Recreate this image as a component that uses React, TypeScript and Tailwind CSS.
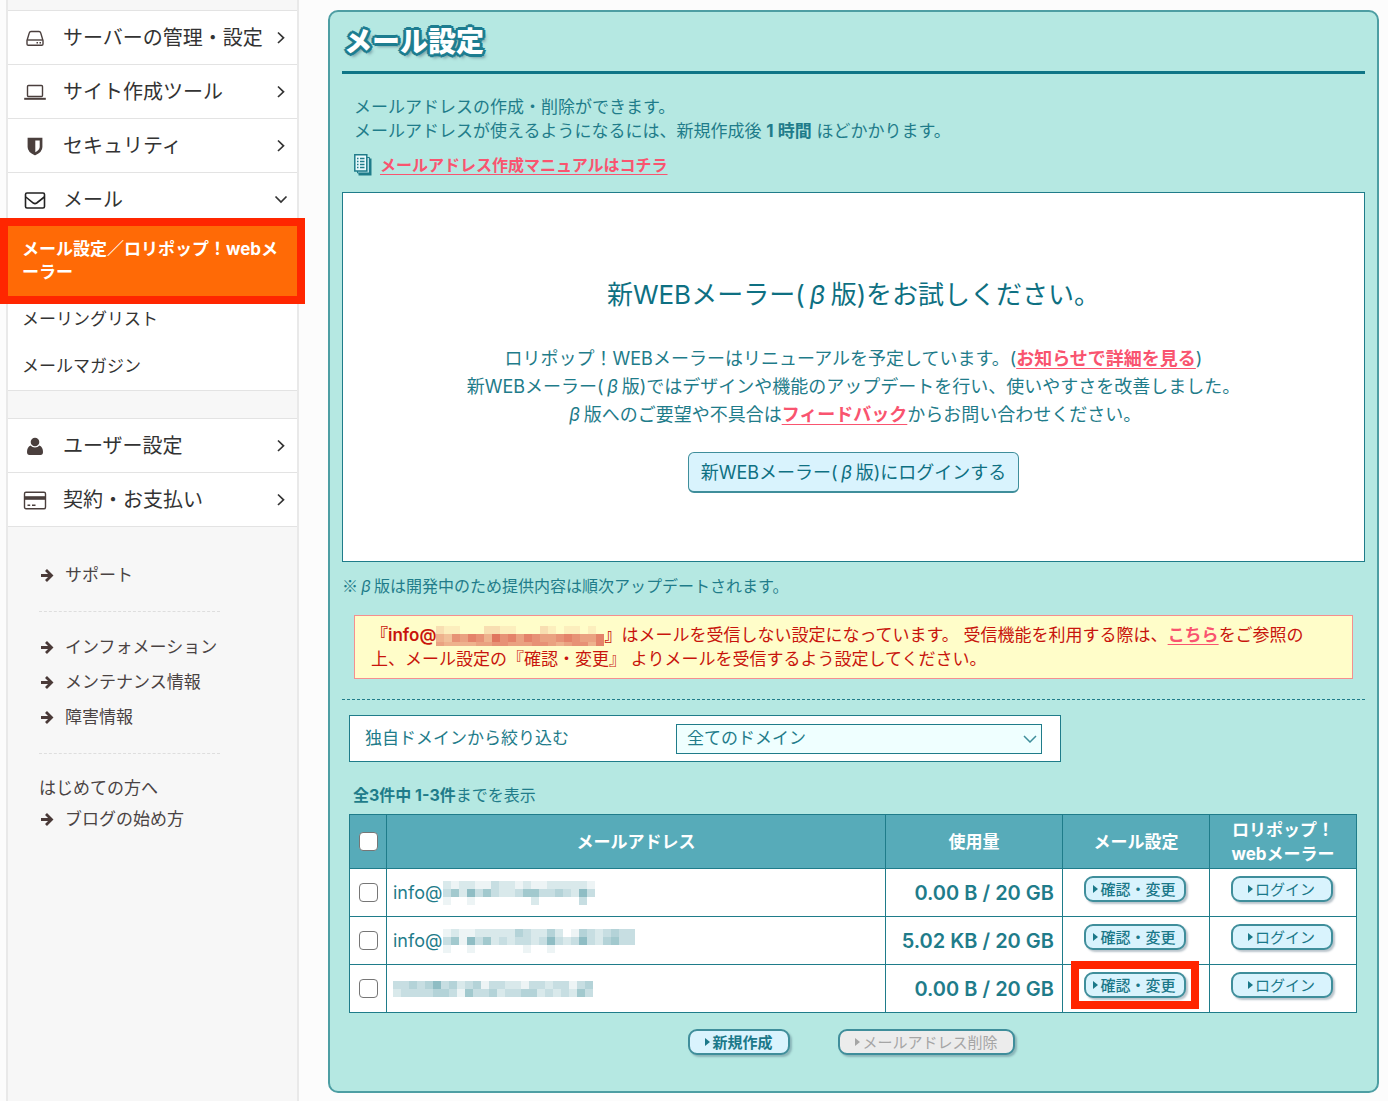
import React from 'react';

type IconName = 'server' | 'laptop' | 'shield' | 'mail' | 'user' | 'card';

const SERVER_MENU: { icon: IconName; label: string }[] = [
  { icon: 'server', label: 'サーバーの管理・設定' },
  { icon: 'laptop', label: 'サイト作成ツール' },
  { icon: 'shield', label: 'セキュリティ' },
];

const ACCOUNT_MENU: { icon: IconName; label: string }[] = [
  { icon: 'user', label: 'ユーザー設定' },
  { icon: 'card', label: '契約・お支払い' },
];

// Each digit is the strength of one 8px block, 0 = empty
const MASK_A = [
  '2122113221211222221',
  '3526353223553343263',
  '1001000000020000030',
];
const MASK_B = [
  '121122222432242014323433',
  '351635232332363236324533',
  '100100000010010000000000',
];
const MASK_C = [
  '3343463423413322133233134',
  '2333344315334233442323253',
];
const MASK_WARN = [
  '211000221100021011010',
  '547687597868766787668',
  '655556677666776567758',
];

const MAIL_ROWS = [
  { name: 'info@', mask: MASK_A, usage: '0.00 B / 20 GB', marked: false },
  { name: 'info@', mask: MASK_B, usage: '5.02 KB / 20 GB', marked: false },
  { name: '', mask: MASK_C, usage: '0.00 B / 20 GB', marked: true },
];

const Mosaic: React.FC<{ rows: string[]; color: string; className?: string }> = ({ rows, color, className }) => (
  <svg
    width={rows[0].length * 8}
    height={rows.length * 8}
    className={className}
    shapeRendering="crispEdges"
    aria-hidden="true"
  >
    {rows.map((row, y) =>
      row.split('').map((v, x) => (
        <rect key={`${x}-${y}`} x={x * 8} y={y * 8} width="8" height="8" fill={color} opacity={Number(v) / 12} />
      ))
    )}
  </svg>
);

const MenuIcon: React.FC<{ name: IconName }> = ({ name }) => (
  <svg width="24" height="24" viewBox="0 0 24 24" fill="none" stroke="#4a3f3d" strokeWidth="1.4" aria-hidden="true">
    {name === 'server' && (
      <>
        <path d="M4 14.5L6.3 6.9Q6.700 5.500 8 5.500H16Q17.300 5.500 17.700 6.900L20 14.500V18Q20 19.300 18.700 19.300H5.300Q4 19.300 4 18Z" />
        <path d="M4.300 14H19.700" />
        <path d="M13.500 16.700H15M16.500 16.700H18" strokeWidth="1.600" />
      </>
    )}
    {name === 'laptop' && (
      <>
        <rect x="4.500" y="5.500" width="15" height="11" rx="1" />
        <path d="M1.200 18.800h21.600" strokeWidth="2" />
      </>
    )}
    {name === 'shield' && (
      <>
        <path d="M5.300 4.500h13.400v8.500q0 4.700-6.700 7.600-6.700-2.900-6.700-7.600Z" fill="#4a3f3d" />
        <path d="M12.300 6.500h4.400v6.500q0 2.800-4.400 5.200Z" fill="#fff" stroke="none" />
      </>
    )}
    {name === 'mail' && (
      <>
        <rect x="2.500" y="5" width="19" height="15" rx="1.500" stroke="#222" strokeWidth="1.600" />
        <path d="m2.800 9 7.500 6q1.700 1.200 3.400 0L21.300 9" stroke="#222" strokeWidth="1.600" />
      </>
    )}
    {name === 'user' && (
      <g fill="#4a3f3d" stroke="none">
        <circle cx="12" cy="8" r="4.300" />
        <path d="M7.500 11.500Q4 13 4 18q0 3 2.500 3h11q2.500 0 2.500-3 0-5-3.500-6.500-1.700 2-4.500 2t-4.500-2Z" />
      </g>
    )}
    {name === 'card' && (
      <>
        <rect x="1.500" y="4.200" width="21" height="16.600" rx="1.500" />
        <path d="M1.500 10h21" strokeWidth="3.600" />
        <path d="M4.500 17.200h2.700M9 17.200h3.500" strokeWidth="1.500" />
      </>
    )}
  </svg>
);

const Chevron: React.FC<{ down?: boolean }> = ({ down }) => (
  <svg width="14" height="14" viewBox="0 0 14 14" fill="none" stroke="#333" strokeWidth="1.700" aria-hidden="true">
    <path d={down ? 'M1.500 3.500 7 9l5.500-5.500' : 'M4 1.500 9.500 6.800 4 12'} />
  </svg>
);

const MenuRow: React.FC<{ icon: IconName; label: string; open?: boolean }> = ({ icon, label, open }) => (
  <a href="#" className={`flex items-center bg-white pr-[9px] pl-[15px] ${open ? 'h-[53px]' : 'h-[54px] border-b border-[#e3e3e3]'}`}>
    <MenuIcon name={icon} />
    <span className="ml-4 flex-1 text-[20px] whitespace-nowrap text-[#333]">{label}</span>
    <Chevron down={open} />
  </a>
);

const ArrowLink: React.FC<{ label: string }> = ({ label }) => (
  <a href="#" className="flex h-[35px] items-center gap-2.5 text-[17px] text-[#4a4343]">
    <svg width="16" height="16" viewBox="0 0 16 16" fill="none" stroke="#4a3a38" strokeWidth="2.800" aria-hidden="true">
      <path d="M2 7.500H12.500M7 2 12.500 7.500 7 13" />
    </svg>
    {label}
  </a>
);

const PillButton: React.FC<{ label: string; className?: string; disabled?: boolean }> = ({ label, className = '', disabled }) => (
  <button
    type="button"
    disabled={disabled}
    className={`inline-flex h-[26px] items-center justify-center gap-0.5 rounded-[9px] border-2 border-[#3f8e9b] text-[15px] leading-none whitespace-nowrap shadow-[2px_2px_2px_rgba(60,90,110,0.35)] ${
      disabled ? 'bg-[#ececec] text-[#a5a5a5]' : 'bg-[#d9f3fd] text-[#1b7889]'
    } ${className}`}
  >
    <svg width="5" height="8" viewBox="0 0 5 8" fill="currentColor" aria-hidden="true">
      <path d="M0 0 5 4 0 8Z" />
    </svg>
    {label}
  </button>
);

const PinkLink: React.FC<{ children: React.ReactNode }> = ({ children }) => (
  <a href="#" className="font-bold text-[#f9546f] underline underline-offset-3">
    {children}
  </a>
);

const Beta = () => <span className="inline-block w-[1em] text-center italic">β</span>;

const Check: React.FC<{ label: string }> = ({ label }) => (
  <input
    type="checkbox"
    aria-label={label}
    className="mx-auto block size-[19px] appearance-none rounded-[4px] border border-[#767676] bg-white"
  />
);

const Sidebar = () => (
  <aside className="w-[293px] shrink-0 border-x-2 border-[#e9e9e9] bg-[#f7f7f7] pt-[10px]">
    <nav className="border-t border-[#e3e3e3]">
      {SERVER_MENU.map((m) => (
        <MenuRow key={m.label} {...m} />
      ))}
      <MenuRow icon="mail" label="メール" open />
      <div className="relative bg-[#ff6a06]">
        <a href="#" className="block px-3.5 py-3 text-[17px] leading-[23px] font-bold break-all text-white">
          メール設定／ロリポップ！webメーラー
        </a>
        <span className="pointer-events-none absolute -inset-2 border-8 border-[#ff2600]" />
      </div>
      <a href="#" className="block bg-white px-3.5 py-3 text-[17px] leading-[23px] text-[#333]">メーリングリスト</a>
      <a href="#" className="block border-b border-[#e3e3e3] bg-white px-3.5 py-3 text-[17px] leading-[23px] text-[#333]">
        メールマガジン
      </a>
    </nav>
    <nav className="mt-[27px] border-t border-[#e3e3e3]">
      {ACCOUNT_MENU.map((m) => (
        <MenuRow key={m.label} {...m} />
      ))}
    </nav>
    <div className="w-[212px] pt-[31px] pl-[31px]">
      <ArrowLink label="サポート" />
      <hr className="my-[18px] border-t border-dashed border-[#dedede]" />
      <ArrowLink label="インフォメーション" />
      <ArrowLink label="メンテナンス情報" />
      <ArrowLink label="障害情報" />
      <hr className="my-[18px] border-t border-dashed border-[#dedede]" />
      <p className="pt-0.5 text-[17px] leading-7 text-[#4a4343]">はじめての方へ</p>
      <ArrowLink label="ブログの始め方" />
    </div>
  </aside>
);

const MailTable = () => (
  <table className="w-full table-fixed border-collapse border border-[#1f7c8a] bg-white text-[17px] [&_td]:border [&_td]:border-[#1f7c8a] [&_th]:border [&_th]:border-[#1f7c8a]">
    <colgroup>
      <col className="w-[37px]" />
      <col />
      <col className="w-[177px]" />
      <col className="w-[147px]" />
      <col className="w-[147px]" />
    </colgroup>
    <thead>
      <tr className="h-[54px] bg-[#57abb9] leading-6 text-white">
        <th className="p-0">
          <Check label="すべて選択" />
        </th>
        <th className="p-0">メールアドレス</th>
        <th className="p-0">使用量</th>
        <th className="p-0">メール設定</th>
        <th className="p-0">
          ロリポップ！
          <br />
          webメーラー
        </th>
      </tr>
    </thead>
    <tbody>
      {MAIL_ROWS.map((row, i) => (
        <tr key={i} className="h-12">
          <td className="p-0 text-center">
            <Check label={`${i + 1}件目を選択`} />
          </td>
          <td className="p-0">
            <div className="flex h-6 items-center pl-1.5">
              {row.name && <span className="w-[50px] text-[18px]">{row.name}</span>}
              <Mosaic rows={row.mask} color="#1f7c8a" />
            </div>
          </td>
          <td className="p-0 pr-2 text-right text-[20px] font-semibold whitespace-nowrap">{row.usage}</td>
          <td className="pt-1.5 pr-[3px] pb-0 pl-0 text-center align-top">
            <span className="relative inline-flex">
              <PillButton label="確認・変更" className="w-[102px] font-medium" />
              {row.marked && (
                <span className="pointer-events-none absolute -inset-x-[13px] -inset-y-[11px] border-8 border-[#ff2600]" />
              )}
            </span>
          </td>
          <td className="pt-1.5 pr-[3px] pb-0 pl-0 text-center align-top">
            <PillButton label="ログイン" className="w-[102px]" />
          </td>
        </tr>
      ))}
    </tbody>
  </table>
);

const App: React.FC = () => {
  return (
    <div className="flex min-h-screen bg-[#fcfcfc] pl-1.5 font-['Inter','Noto_Sans_CJK_JP',sans-serif]">
      <Sidebar />
      <main className="min-w-0 flex-1 pt-[10px] pr-[9px] pb-2 pl-[29px] text-[#1f7c8a]">
        <div className="rounded-[10px] border-2 border-[#4d9ea3] bg-[#b5e8e2] px-3 pt-3 pb-9">
          <h1 className="border-b-3 border-[#0e7586] pb-2.5 pl-0.5 text-[28px] leading-[37px] font-black text-white">
            <span className="[text-shadow:2px_2px_0_#1d7d90,-2px_2px_0_#1d7d90,2px_-2px_0_#1d7d90,-2px_-2px_0_#1d7d90,3px_0_0_#1d7d90,-3px_0_0_#1d7d90,0_3px_0_#1d7d90,0_-3px_0_#1d7d90,3px_4px_3px_rgba(60,90,110,0.5)]">
              メール設定
            </span>
          </h1>

          <div className="px-3 pt-[21px] text-[17px] leading-6">
            <p>メールアドレスの作成・削除ができます。</p>
            <p>
              メールアドレスが使えるようになるには、新規作成後 <b>1 時間</b> ほどかかります。
            </p>
            <p className="mt-2.5 flex items-center gap-2 text-[16px]">
              <svg width="18" height="22" viewBox="0 0 18 22" aria-hidden="true">
                <path d="M4.500 4.500H17.500V21.500H4.500Z" fill="#1f7c8a" />
                <path d="M3.500 3.500H15.500V19H3.500Z" fill="#b5dfe6" stroke="#1f7c8a" />
                <path d="M.800.800H12.800V17H.800Z" fill="#e8fafc" stroke="#1f7c8a" strokeWidth="1.500" />
                <path d="M3 4.500h1.500M6 4.500h4.500M3 7.500h1.500M6 7.500h4.500M3 10.500h1.500M6 10.500h4.500M3 13.500h1.500M6 13.500h4.500" stroke="#1f7c8a" strokeWidth="1.300" />
              </svg>
              <PinkLink>メールアドレス作成マニュアルはコチラ</PinkLink>
            </p>
          </div>

          <section className="mt-[15px] flex flex-col items-center border border-[#1f7c8a] bg-white pt-20 pb-[68px] text-center">
            <h2 className="text-[26px] leading-[44px] text-[#0e7082]">
              新WEBメーラー(<Beta />版)をお試しください。
            </h2>
            <p className="mt-7 text-[18px] leading-7">
              ロリポップ！WEBメーラーはリニューアルを予定しています。(<PinkLink>お知らせで詳細を見る</PinkLink>)
              <br />
              新WEBメーラー(<Beta />版)ではデザインや機能のアップデートを行い、使いやすさを改善しました。
              <br />
              <Beta />版へのご要望や不具合は<PinkLink>フィードバック</PinkLink>からお問い合わせください。
            </p>
            <button
              type="button"
              className="mt-[23px] h-[41px] rounded-md border border-b-2 border-[#3f8e9b] bg-[#d9f3fd] px-3 text-[18px] text-[#0e7082]"
            >
              新WEBメーラー(<Beta />版)にログインする
            </button>
          </section>

          <p className="mt-[11px] text-[16px] leading-6">
            <span className="font-['Noto_Sans_CJK_JP',sans-serif]">※</span>
            <Beta />版は開発中のため提供内容は順次アップデートされます。
          </p>

          <div className="mx-3 mt-[17px] border border-[#f58f8f] bg-[#fffdc9] px-4 py-[7px] text-[17px] leading-6 text-[#c8140c]">
            <b className="font-semibold">『info@</b>
            <Mosaic rows={MASK_WARN} color="#d6473a" className="inline h-5 w-[168px] align-middle" />
            <b>』</b>はメールを受信しない設定になっています。 受信機能を利用する際は、<PinkLink>こちら</PinkLink>
            をご参照の
            <br />
            上、メール設定の『確認・変更』 よりメールを受信するよう設定してください。
          </div>

          <hr className="mt-5 border-t border-dashed border-[#1f7c8a]" />

          <div className="mt-[15px] mr-2 ml-[7px]">
            <div className="flex h-[47px] max-w-[712px] items-center border border-[#1f7c8a] bg-white pr-[18px] pl-[15px] text-[17px]">
              <label htmlFor="domain" className="flex-1">独自ドメインから絞り込む</label>
              <div className="relative w-[366px]">
                <select
                  id="domain"
                  className="block h-[30px] w-full appearance-none border border-[#1f7c8a] bg-[#efffff] px-2.5 text-[17px] leading-none"
                >
                  <option>全てのドメイン</option>
                </select>
                <svg width="14" height="8" viewBox="0 0 14 8" fill="none" stroke="#3f8e9b" strokeWidth="1.500" className="pointer-events-none absolute top-[11px] right-[5px]" aria-hidden="true">
                  <path d="m1 1 6 6 6-6" />
                </svg>
              </div>
            </div>
            <p className="mt-[21px] mb-[7px] pl-1 text-[16px] leading-6">
              <b>全3件中 1-3件</b>までを表示
            </p>
            <MailTable />
            <div className="mt-4 flex justify-center gap-12 pr-[3px]">
              <PillButton label="新規作成" className="w-[102px] font-bold" />
              <PillButton label="メールアドレス削除" className="w-[177px]" disabled />
            </div>
          </div>
        </div>
      </main>
    </div>
  );
};

export default App;
